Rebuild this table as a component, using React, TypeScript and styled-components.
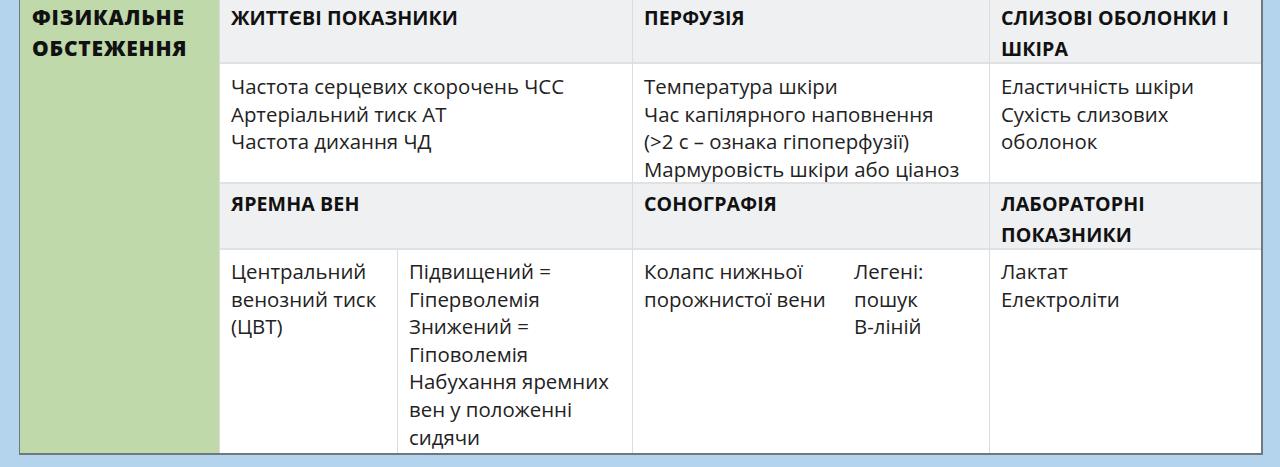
import React from "react";
import styled, { createGlobalStyle } from "styled-components";

const GlobalStyle = createGlobalStyle`
  html, body {
    margin: 0;
    padding: 0;
    background: #b4d4ee;
  }
  body {
    font-family: "Open Sans", "Noto Sans", sans-serif;
    color: #1a1a1a;
  }
`;

const Page = styled.div`
  width: 1280px;
  height: 467px;
  padding: 0 17px 0 19px;
  box-sizing: border-box;
  overflow: hidden;
`;

const Table = styled.div`
  display: grid;
  grid-template-columns: 200px 178px 235px 357px 271px;
  grid-template-rows: 64px 120px 66px 203px;
  border-left: 1px solid #6e7881;
  border-right: 2px solid #6e7881;
  border-bottom: 2px solid #6e7881;
  background: #fff;
  width: 1244px;
  box-sizing: border-box;
`;

const SideHead = styled.div`
  grid-row: 1 / span 4;
  background: #bfd9ab;
  border-right: 1px solid #dcdcdc;
  padding: 2px 6px 0 12px;
  font-size: 21px;
  font-weight: 800;
  line-height: 31px;
  color: #111;
  letter-spacing: 0.8px;
`;

const Cell = styled.div<{ $head?: boolean; $span?: number; $last?: boolean }>`
  grid-column: span ${(p) => p.$span ?? 1};
  background: ${(p) => (p.$head ? "#eef0f2" : "#fff")};
  border-right: ${(p) => (p.$last ? "none" : "1px solid #dcdcdc")};
  border-bottom: 2px solid #e0e1e3;
  padding: ${(p) => (p.$head ? "3px 6px 0 11px" : "9px 6px 0 11px")};
  font-size: ${(p) => (p.$head ? "19.6px" : "20.4px")};
  font-weight: ${(p) => (p.$head ? 700 : 400)};
  line-height: ${(p) => (p.$head ? "30.5px" : "27.6px")};
  letter-spacing: ${(p) => (p.$head ? "0.1px" : "0")};
  color: ${(p) => (p.$head ? "#111" : "#222")};
  box-sizing: border-box;
  overflow: hidden;
  white-space: nowrap;
`;

const LowHead = styled(Cell)`
  padding-top: 5px;
`;

const Split = styled.div`
  display: flex;
`;

const SplitPart = styled.div<{ $w?: number }>`
  width: ${(p) => (p.$w ? `${p.$w}px` : "auto")};
  flex: ${(p) => (p.$w ? "none" : "1")};
`;

const LastRow = styled(Cell)`
  border-bottom: none;
  padding-top: 8px;
`;

export default function App() {
  return (
    <>
      <GlobalStyle />
      <Page>
        <Table>
          <SideHead>
            ФІЗИКАЛЬНЕ
            <br />
            ОБСТЕЖЕННЯ
          </SideHead>

          <Cell $head $span={2}>ЖИТТЄВІ ПОКАЗНИКИ</Cell>
          <Cell $head>ПЕРФУЗІЯ</Cell>
          <Cell $head $last>
            СЛИЗОВІ ОБОЛОНКИ І
            <br />
            ШКІРА
          </Cell>

          <Cell $span={2}>
            Частота серцевих скорочень ЧСС
            <br />
            Артеріальний тиск АТ
            <br />
            Частота дихання ЧД
          </Cell>
          <Cell>
            Температура шкіри
            <br />
            Час капілярного наповнення
            <br />
            (&gt;2 с – ознака гіпоперфузії)
            <br />
            Мармуровість шкіри або ціаноз
          </Cell>
          <Cell $last>
            Еластичність шкіри
            <br />
            Сухість слизових
            <br />
            оболонок
          </Cell>

          <LowHead $head $span={2}>ЯРЕМНА ВЕН</LowHead>
          <LowHead $head>СОНОГРАФІЯ</LowHead>
          <LowHead $head $last>
            ЛАБОРАТОРНІ
            <br />
            ПОКАЗНИКИ
          </LowHead>

          <LastRow>
            Центральний
            <br />
            венозний тиск
            <br />
            (ЦВТ)
          </LastRow>
          <LastRow>
            Підвищений =
            <br />
            Гіперволемія
            <br />
            Знижений =
            <br />
            Гіповолемія
            <br />
            Набухання яремних
            <br />
            вен у положенні
            <br />
            сидячи
          </LastRow>
          <LastRow>
            <Split>
              <SplitPart $w={210}>
                Колапс нижньої
                <br />
                порожнистої вени
              </SplitPart>
              <SplitPart>
                Легені:
                <br />
                пошук
                <br />
                B-ліній
              </SplitPart>
            </Split>
          </LastRow>
          <LastRow $last>
            Лактат
            <br />
            Електроліти
          </LastRow>
        </Table>
      </Page>
    </>
  );
}
